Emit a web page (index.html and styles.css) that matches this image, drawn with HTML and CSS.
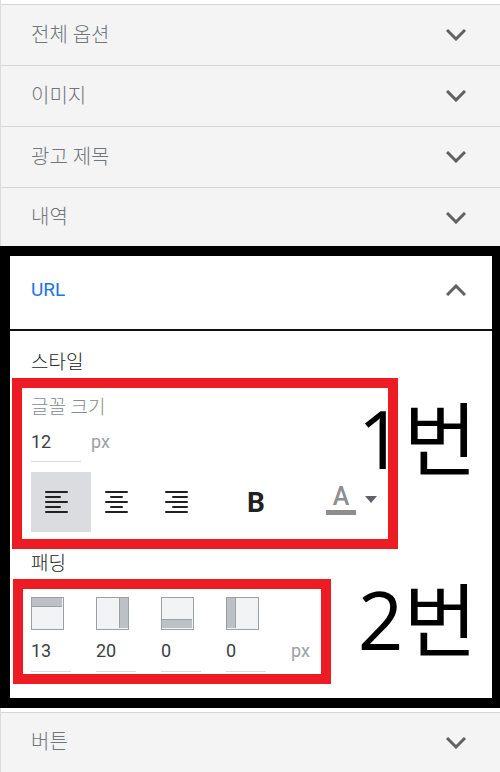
FILE: index.html
```html
<!DOCTYPE html>
<html lang="ko">
<head>
    <meta charset="UTF-8">
    <meta name="viewport" content="width=device-width, initial-scale=1.0">
    <title>URL 스타일 옵션</title>
    <link rel="stylesheet" href="styles.css">
</head>
<body>
    <div class="panel">
        <div class="group">
            <button type="button" class="row">
                <span>전체 옵션</span>
                <svg class="chevron" viewBox="0 0 20 12"><path d="M1 1l9 9 9-9"/></svg>
            </button>
            <button type="button" class="row">
                <span>이미지</span>
                <svg class="chevron" viewBox="0 0 20 12"><path d="M1 1l9 9 9-9"/></svg>
            </button>
            <button type="button" class="row">
                <span>광고 제목</span>
                <svg class="chevron" viewBox="0 0 20 12"><path d="M1 1l9 9 9-9"/></svg>
            </button>
            <button type="button" class="row">
                <span>내역</span>
                <svg class="chevron" viewBox="0 0 20 12"><path d="M1 1l9 9 9-9"/></svg>
            </button>
        </div>

        <section class="open-section">
            <button type="button" class="open-header" aria-expanded="true">
                <span>URL</span>
                <svg class="chevron" viewBox="0 0 20 12"><path d="M1 11l9-9 9 9"/></svg>
            </button>

            <div class="content">
                <div class="block">
                    <h2 class="block-title">스타일</h2>
                    <div class="box style-box">
                        <label class="size-label" for="fontSize">글꼴 크기</label>
                        <div class="size-field">
                            <input class="number size-input" id="fontSize" type="text" value="12">
                            <span class="unit">px</span>
                        </div>
                        <div class="tools">
                            <button type="button" class="tool active" aria-label="왼쪽 정렬" aria-pressed="true">
                                <svg width="24" height="24" viewBox="0 0 24 24"><path d="M2 2h21M2 7h14M2 12h21M2 17h14M2 22h21"/></svg>
                            </button>
                            <button type="button" class="tool" aria-label="가운데 정렬">
                                <svg width="24" height="24" viewBox="0 0 24 24"><path d="M2 2h21M7 7h11M2 12h21M7 17h11M2 22h21"/></svg>
                            </button>
                            <button type="button" class="tool" aria-label="오른쪽 정렬">
                                <svg width="24" height="24" viewBox="0 0 24 24"><path d="M2 2h21M9 7h14M2 12h21M9 17h14M2 22h21"/></svg>
                            </button>
                            <button type="button" class="tool bold">B</button>
                            <button type="button" class="color" aria-label="글자 색">
                                <span class="color-letter">A</span>
                                <svg width="12" height="7" viewBox="0 0 12 7"><path d="M0 0h12L6 7z"/></svg>
                            </button>
                        </div>
                    </div>
                    <span class="note style-note">1번</span>
                </div>

                <div class="block">
                    <h2 class="block-title">패딩</h2>
                    <div class="box padding-box">
                        <label class="side">
                            <span class="side-icon top" role="img" aria-label="위"></span>
                            <input class="number" type="text" value="13">
                        </label>
                        <label class="side">
                            <span class="side-icon right" role="img" aria-label="오른쪽"></span>
                            <input class="number" type="text" value="20">
                        </label>
                        <label class="side">
                            <span class="side-icon bottom" role="img" aria-label="아래"></span>
                            <input class="number" type="text" value="0">
                        </label>
                        <label class="side">
                            <span class="side-icon left" role="img" aria-label="왼쪽"></span>
                            <input class="number" type="text" value="0">
                        </label>
                        <span class="unit">px</span>
                    </div>
                    <span class="note padding-note">2번</span>
                </div>
            </div>
        </section>

        <div class="group">
            <button type="button" class="row">
                <span>버튼</span>
                <svg class="chevron" viewBox="0 0 20 12"><path d="M1 1l9 9 9-9"/></svg>
            </button>
        </div>
    </div>
</body>
</html>
```

FILE: styles.css
```css
* {
    box-sizing: border-box;
}

body {
    margin: 0;
    background: #fff;
    font-family: Roboto, "Noto Sans CJK KR", sans-serif;
    font-size: 18px;
    color: #3c4043;
}

button,
input {
    font: inherit;
    color: inherit;
    border: 0;
    border-radius: 0;
    padding: 0;
    background: none;
}

button {
    cursor: pointer;
}

.group {
    padding-top: 4px;
    border-left: 1px solid #dadce0;
}

.row,
.open-header {
    display: flex;
    align-items: center;
    justify-content: space-between;
    width: 100%;
    text-align: left;
}

.row {
    height: 61px;
    padding: 0 34px 4px 30px;
    border-top: 1px solid #d5d5d5;
    background: #f4f4f4;
    color: #70767b;
    font-size: 20px;
    font-weight: 300;
}

.row:last-child {
    height: 60px;
}

.chevron {
    width: 20px;
    height: 12px;
    margin-top: 4px;
    fill: none;
    stroke: #616161;
    stroke-width: 3;
}

/* 펼쳐진 섹션 */
.open-section {
    margin-top: -1px;
    border: 10px solid #000;
    border-right-width: 8px;
    background: #fff;
}

.open-header {
    height: 75px;
    padding: 0 26px 6px 21px;
    border-bottom: 2px solid #111;
    color: #1a73e8;
    font-size: 19px;
}

.open-header .chevron {
    margin-top: 0;
}

.content {
    padding: 17px 0 14px;
}

.block {
    position: relative;
}

.block-title {
    margin: 0;
    padding-left: 21px;
    color: #202124;
    font-size: 19px;
    font-weight: 300;
    line-height: 30px;
}

.box {
    border: 10px solid #ed1c24;
}

.style-box {
    margin: 0 94px 0 2px;
    padding: 8px 9px 7px;
}

.size-label {
    display: block;
    color: #868c92;
    font-size: 19px;
    font-weight: 300;
    line-height: 24px;
}

.size-field {
    display: flex;
    align-items: center;
    gap: 10px;
    padding-top: 1px;
}

.number {
    display: block;
    width: 40px;
    height: 42px;
    border-bottom: 1px solid #dadce0;
}

.size-input {
    width: 50px;
    height: 41px;
}

.unit {
    color: #9aa0a6;
}

.tools {
    display: flex;
    margin-top: 10px;
}

.tool {
    display: flex;
    align-items: center;
    justify-content: center;
    width: 60px;
    height: 60px;
    color: #212121;
}

.tool.active {
    background: #dadce0;
}

.tool svg {
    margin-right: 10px;
    stroke: #212121;
    stroke-width: 2;
    stroke-linecap: round;
}

.bold {
    margin-left: 15px;
    font-size: 28px;
    font-weight: 700;
}

.color {
    display: flex;
    align-items: center;
    gap: 9px;
    margin-left: 40px;
    padding-bottom: 6px;
}

.color-letter {
    width: 30px;
    border-bottom: 5px solid #8e8e8e;
    color: #8e8e8e;
    font-size: 25px;
    font-weight: 500;
    line-height: 26px;
}

.color svg {
    fill: #5f6368;
}

.padding-box {
    display: flex;
    align-items: flex-end;
    gap: 25px;
    margin: 0 161px 0 3px;
    padding: 8px 8px 2px;
}

.padding-box .unit {
    line-height: 42px;
}

.side-icon {
    display: block;
    width: 33px;
    height: 33px;
    border: 1px solid #9aa0a6;
    background: #f1f3f4;
}

.side-icon::before {
    content: "";
    display: block;
    background: #bdc1c6;
}

.top::before {
    width: 30px;
    height: 8px;
    border-bottom: 1px solid #9aa0a6;
}

.right::before {
    width: 8px;
    height: 30px;
    margin-left: auto;
    border-left: 1px solid #9aa0a6;
}

.bottom {
    display: flex;
    align-items: flex-end;
    padding-bottom: 1px;
}

.bottom::before {
    width: 30px;
    height: 8px;
    border-top: 1px solid #9aa0a6;
}

.left::before {
    width: 8px;
    height: 30px;
    border-right: 1px solid #9aa0a6;
}

/* 번호 표시 */
.note {
    position: absolute;
    right: 15px;
    color: #000;
    font-family: "Open Sans", "Noto Sans CJK KR", sans-serif;
    font-size: 80px;
    font-weight: 400;
    line-height: 120px;
}

.style-note {
    bottom: 51px;
}

.padding-note {
    bottom: 5px;
}
```
